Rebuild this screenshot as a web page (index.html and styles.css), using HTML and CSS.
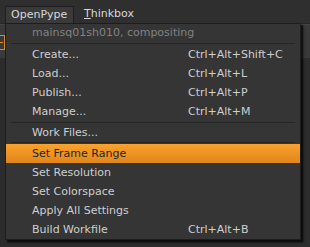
FILE: index.html
```html
<!DOCTYPE html>
<html>
<head>
<meta charset="utf-8">
<link rel="stylesheet" href="styles.css">
</head>
<body>
<div class="menubar">
  <div class="mb-item active">OpenPype</div>
  <div class="mb-item"><span class="ul">T</span>hinkbox</div>
</div>
<div class="workspace">
  <div class="toolbar">
    <div class="tool-icon"></div>
  </div>
  <div class="panel"></div>
</div>

<div class="menu">
  <div class="title">mainsq01sh010, compositing</div>
  <div class="sep"></div>
  <div class="item"><span>Create...</span><span>Ctrl+Alt+Shift+C</span></div>
  <div class="item"><span>Load...</span><span>Ctrl+Alt+L</span></div>
  <div class="item"><span>Publish...</span><span>Ctrl+Alt+P</span></div>
  <div class="item"><span>Manage...</span><span>Ctrl+Alt+M</span></div>
  <div class="sep"></div>
  <div class="item short"><span>Work Files...</span><span></span></div>
  <div class="sep"></div>
  <div class="item hl"><span>Set Frame Range</span><span></span></div>
  <div class="item"><span>Set Resolution</span><span></span></div>
  <div class="item"><span>Set Colorspace</span><span></span></div>
  <div class="item"><span>Apply All Settings</span><span></span></div>
  <div class="item"><span>Build Workfile</span><span>Ctrl+Alt+B</span></div>
</div>
</body>
</html>
```

FILE: styles.css
```css
html, body {
  margin: 0;
  padding: 0;
  width: 310px;
  height: 247px;
  overflow: hidden;
  background: #2c2c2c;
  font-family: "DejaVu Sans", Verdana, sans-serif;
  font-size: 11px;
}

.menubar {
  height: 23px;
  background: #2f2f2f;
  display: flex;
  align-items: flex-end;
  padding-left: 5px;
  gap: 4px;
  border-bottom: 1px solid #262626;
}

.mb-item {
  height: 17px;
  line-height: 16px;
  padding: 0 6px;
  color: #d8d8d8;
  box-sizing: border-box;
}

.mb-item.active {
  background: #3a3a3a;
  border: 1px solid #1f1f1f;
  border-bottom: none;
  padding: 0 5px;
  width: 69px;
}

.ul {
  text-decoration: underline;
}

.workspace {
  display: flex;
  flex-direction: column;
}

.toolbar {
  height: 34px;
  background: #3a3a3a;
  border-top: 1px solid #444;
  box-sizing: border-box;
  display: flex;
  align-items: center;
  padding-top: 2px;
}

.tool-icon {
  position: relative;
  width: 4px;
  height: 13px;
  border: 1px solid #d88a2a;
  border-left: none;
}

.tool-icon::after {
  content: "";
  position: absolute;
  left: 0;
  top: 6px;
  width: 3px;
  height: 1px;
  background: #d88a2a;
}

.panel {
  flex: 1;
  height: 190px;
  background: #2d2d2d;
}

.menu {
  position: absolute;
  left: 5px;
  top: 23px;
  width: 294px;
  background: #353535;
  border: 1px solid #1d1d1d;
  box-shadow: 2px 2px 1px rgba(0, 0, 0, 0.55), 3px 3px 2px rgba(0, 0, 0, 0.3);
  color: #cfcfcf;
}

.title {
  height: 18px;
  line-height: 18px;
  padding-left: 26px;
  color: #828282;
}

.sep {
  height: 3px;
  display: flex;
  align-items: center;
  margin: 0 5px;
}

.sep::before {
  content: "";
  flex: 1;
  height: 1px;
  background: #262626;
}

.item {
  height: 19px;
  line-height: 19px;
  display: grid;
  grid-template-columns: 156px 1fr;
  padding-left: 26px;
  white-space: nowrap;
}

.item.short {
  height: 17px;
  line-height: 17px;
}

.item.hl {
  background: linear-gradient(#f9a22e, #e0861b);
  color: #262626;
}
```
